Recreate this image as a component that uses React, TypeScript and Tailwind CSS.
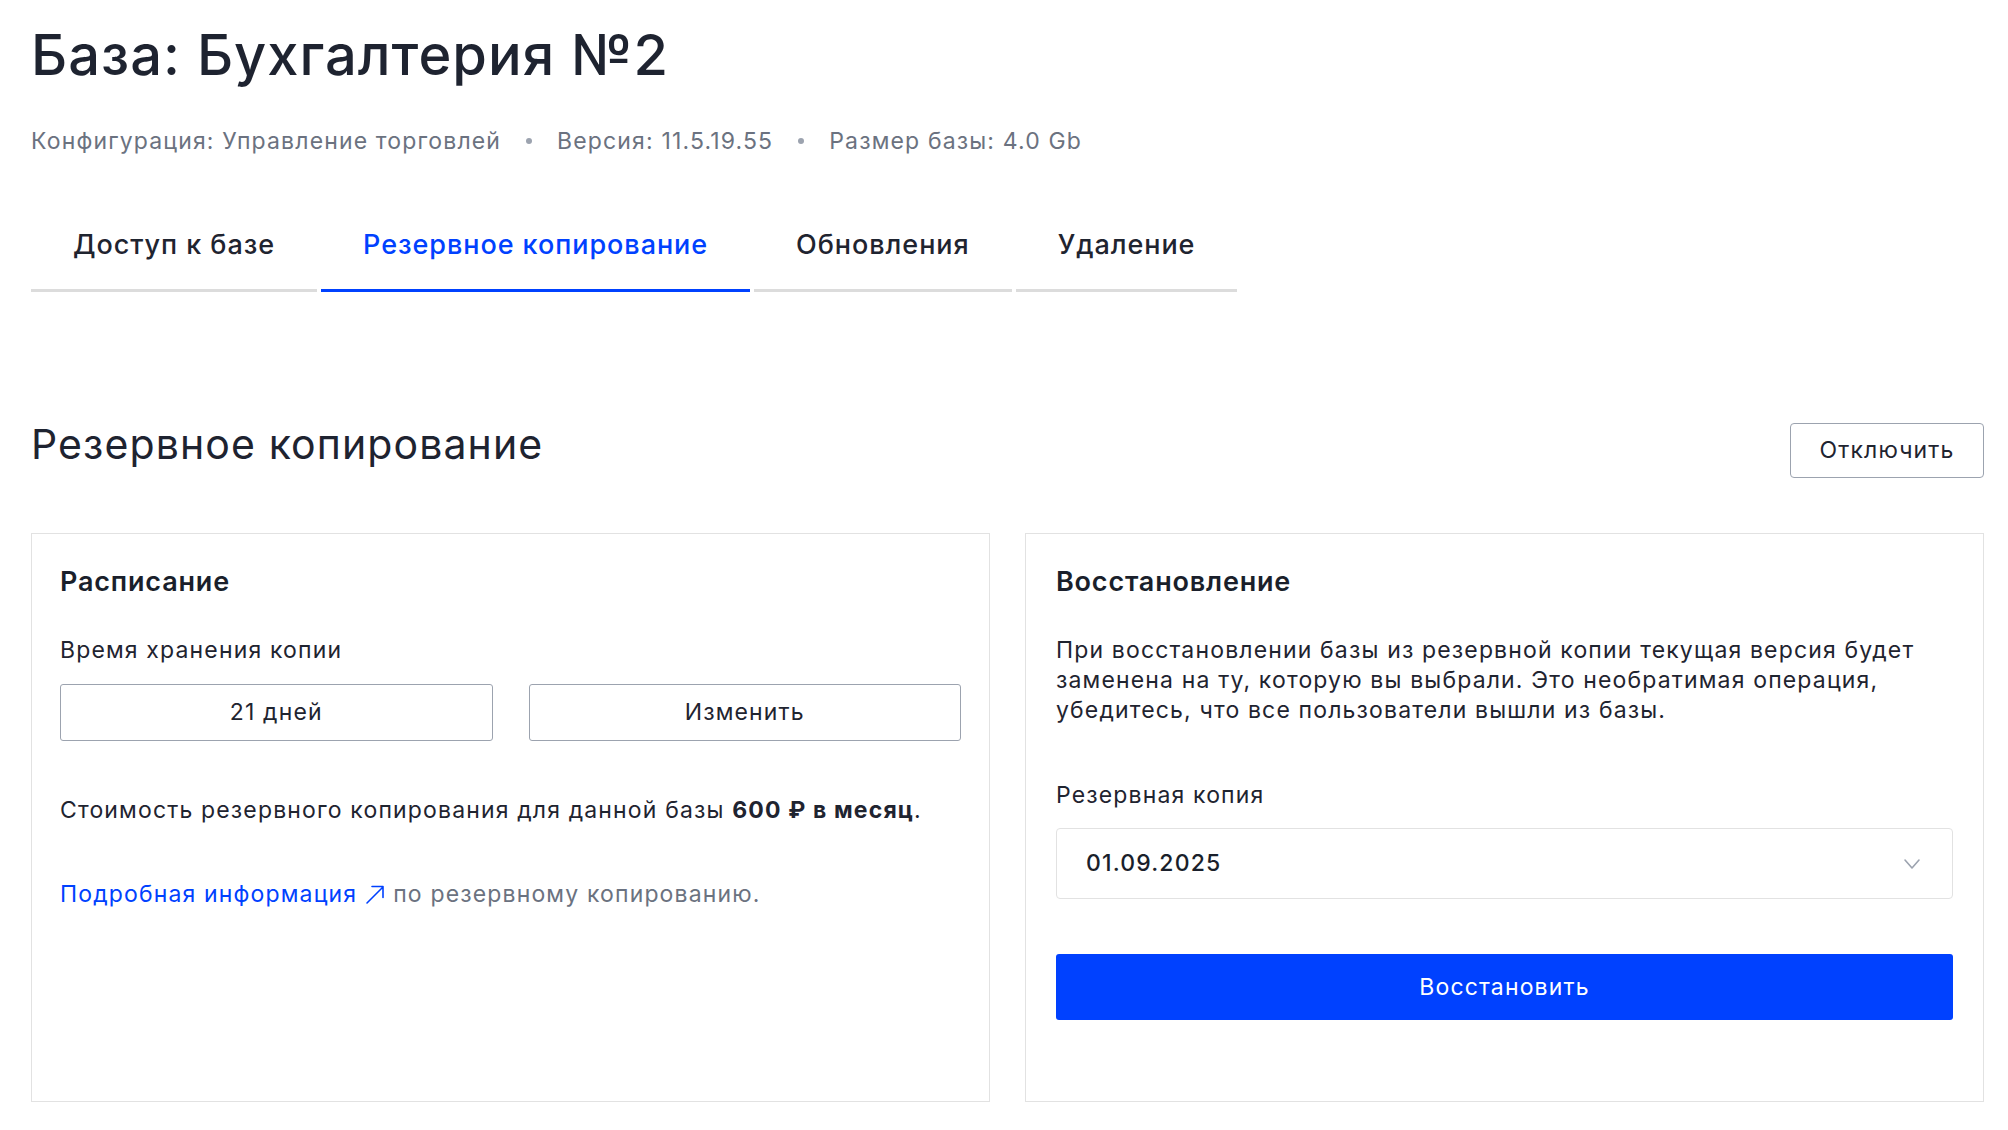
import React from "react";

function ArrowUpRight() {
  return (
    <svg width="22" height="22" viewBox="0 0 22 22" fill="none" className="inline-block align-[-3px] mx-[7px]">
      <path d="M3 20 L19 4 M8 3.5 H19 V14.5" stroke="#0041ff" strokeWidth="1.6" strokeLinecap="round" strokeLinejoin="round" />
    </svg>
  );
}

function Chevron() {
  return (
    <svg width="20" height="14" viewBox="0 0 20 14" fill="none">
      <path d="M3 3 L10 11 L17 3" stroke="#9ca3af" strokeWidth="1.6" strokeLinecap="round" strokeLinejoin="round" />
    </svg>
  );
}

export default function App() {
  const tabs = [
    { label: "Доступ к базе", active: false },
    { label: "Резервное копирование", active: true },
    { label: "Обновления", active: false },
    { label: "Удаление", active: false },
  ];
  return (
    <div
      className="min-h-[1130px] bg-white pl-[31px] pr-[24px] pt-[22px] text-[#1f2430]"
      style={{ fontFamily: "Inter, 'Noto Sans', sans-serif" }}
    >
      <h1 className="text-[56px] leading-[67px] font-medium tracking-[0.018em] text-[#1e2330]">База: Бухгалтерия №2</h1>
      <div className="mt-[37px] flex items-center text-[23px] leading-[30px] tracking-[0.05em] text-[#6b7280]">
        <span>Конфигурация: Управление торговлей</span>
        <span className="mx-[25px] h-[6px] w-[6px] rounded-full bg-[#9ca3af]" />
        <span>Версия: 11.5.19.55</span>
        <span className="mx-[25px] h-[6px] w-[6px] rounded-full bg-[#9ca3af]" />
        <span>Размер базы: 4.0 Gb</span>
      </div>

      <div className="mt-[45px] flex gap-[4px]">
        {tabs.map((t) => (
          <div
            key={t.label}
            className={
              "px-[42px] pt-[27px] pb-[27px] text-[27px] leading-[34px] font-medium tracking-[0.035em] border-b-[3px] " +
              (t.active ? "border-[#0041ff] text-[#0041ff]" : "border-[#dcdcdc] text-[#1f2430]")
            }
          >
            {t.label}
          </div>
        ))}
      </div>

      <div className="mt-[128px] flex items-start justify-between">
        <h2 className="text-[41px] leading-[48px] font-normal tracking-[0.027em] text-[#1e2330]">Резервное копирование</h2>
        <button className="mt-[3px] h-[55px] w-[194px] rounded-[4px] border border-[#9ca3af] bg-white text-[23px] tracking-[0.05em] text-[#1f2430]">
          Отключить
        </button>
      </div>

      <div className="mt-[55px] grid grid-cols-2 gap-[35px]">
        <div className="border border-[#e2e2e2] px-[28px] pt-[32px] pb-[40px]">
          <div className="text-[27px] leading-[32px] font-semibold tracking-[0.03em] text-[#1a1f2b]">Расписание</div>
          <div className="mt-[37px] text-[23px] leading-[30px] tracking-[0.05em]">Время хранения копии</div>
          <div className="mt-[19px] grid grid-cols-2 gap-[36px]">
            <button className="h-[57px] rounded-[3px] border border-[#9ca3af] bg-white text-[23px] tracking-[0.05em] text-[#1f2430]">
              21 дней
            </button>
            <button className="h-[57px] rounded-[3px] border border-[#9ca3af] bg-white text-[23px] tracking-[0.05em] text-[#1f2430]">
              Изменить
            </button>
          </div>
          <p className="mt-[54px] text-[23px] leading-[30px] tracking-[0.05em]">
            Стоимость резервного копирования для данной базы <b className="font-bold">600 ₽ в месяц</b>.
          </p>
          <p className="mt-[54px] text-[23px] leading-[30px] tracking-[0.05em] text-[#6b7280]">
            <a className="text-[#0041ff]">Подробная информация</a>
            <ArrowUpRight />
            по резервному копированию.
          </p>
        </div>

        <div className="border border-[#e2e2e2] px-[30px] pt-[32px] pb-[81px]">
          <div className="text-[27px] leading-[32px] font-semibold tracking-[0.03em] text-[#1a1f2b]">Восстановление</div>
          <p className="mt-[37px] text-[23px] leading-[30px] tracking-[0.05em] whitespace-nowrap">
            При восстановлении базы из резервной копии текущая версия будет
            <br />
            заменена на ту, которую вы выбрали. Это необратимая операция,
            <br />
            убедитесь, что все пользователи вышли из базы.
          </p>
          <div className="mt-[55px] text-[23px] leading-[30px] tracking-[0.05em]">Резервная копия</div>
          <div className="mt-[18px] flex h-[71px] items-center justify-between rounded-[4px] border border-[#e2e2e2] pl-[29px] pr-[30px]">
            <span className="text-[23px] font-medium tracking-[0.05em] text-[#1a1f2b]">01.09.2025</span>
            <Chevron />
          </div>
          <button className="mt-[55px] h-[66px] w-full rounded-[3px] bg-[#0041ff] text-[23px] tracking-[0.05em] text-white">
            Восстановить
          </button>
        </div>
      </div>
    </div>
  );
}
